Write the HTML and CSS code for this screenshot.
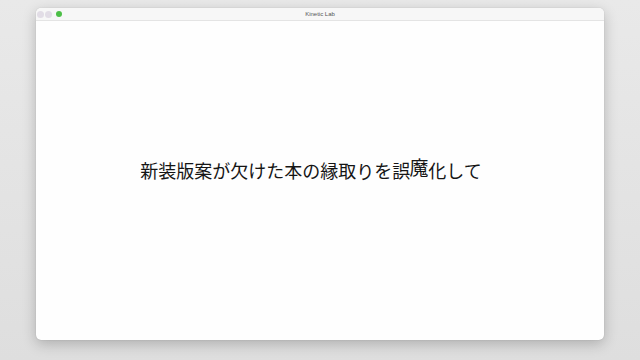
FILE: index.html
```html
<!DOCTYPE html>
<html lang="ja">
<head>
    <meta charset="UTF-8">
    <meta name="viewport" content="width=device-width, initial-scale=1.0">
    <title>Kinetic Lab</title>
    <link rel="stylesheet" href="styles.css">
</head>
<body>

    <div class="window">
        <div class="titlebar">
            <div class="lights">
                <span class="light"></span>
                <span class="light"></span>
                <span class="light green"></span>
            </div>
            <div class="title">Kinetic Lab</div>
        </div>
        <div class="stage">
            <p class="line">新装版案が欠けた本の縁取<span class="low">り</span>を誤<span class="up">魔</span>化して</p>
        </div>
    </div>

</body>
</html>
```

FILE: styles.css
```css
html, body {
    margin: 0;
    height: 100%;
}

body {
    background: linear-gradient(#e9e9e9, #dedede);
    padding: 8px 36px 20px;
    box-sizing: border-box;
    font-family: "Noto Sans CJK JP", "Noto Sans", sans-serif;
}

.window {
    height: 100%;
    display: flex;
    flex-direction: column;
    background-color: #fefefe;
    border-radius: 5px;
    box-shadow: 0 4px 14px rgba(0, 0, 0, 0.22), 0 0 1px rgba(0, 0, 0, 0.25);
    overflow: hidden;
}

.titlebar {
    height: 12px;
    display: flex;
    align-items: center;
    background-color: #f7f7f7;
    border-bottom: 1px solid #e4e4e4;
    position: relative;
}

.lights {
    display: flex;
    align-items: center;
    gap: 1px;
    padding-left: 1px;
}

.light {
    width: 7px;
    height: 7px;
    border-radius: 50%;
    background-color: #e2dde6;
}

.light.green {
    width: 6px;
    height: 6px;
    margin-left: 3px;
    background-color: #4cbf47;
}

.title {
    position: absolute;
    left: 0;
    right: 0;
    text-align: center;
    font-family: "Liberation Sans", Arial, sans-serif;
    font-size: 6px;
    color: #555;
}

.stage {
    flex: 1;
    display: flex;
    align-items: center;
    justify-content: center;
    padding: 0 18px 22px 0;
}

.line {
    margin: 0;
    font-size: 18px;
    line-height: 1;
    color: #151515;
}

.up {
    display: inline-block;
    transform: translateY(-3px) scale(1.05);
}

.low {
    display: inline-block;
    transform: translateY(1px);
}
```
